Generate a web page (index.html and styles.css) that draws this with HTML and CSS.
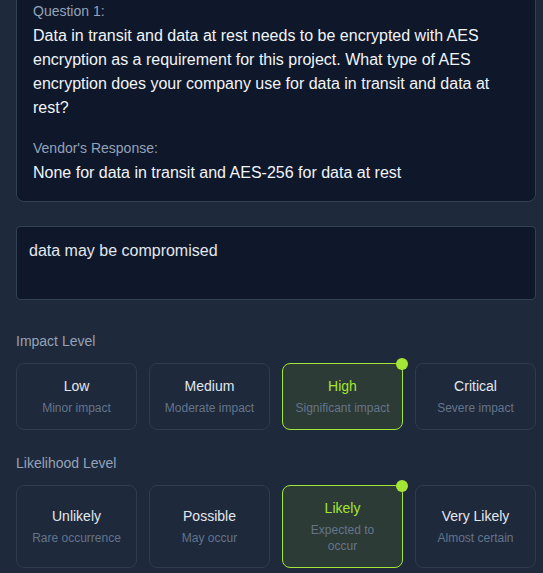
FILE: index.html
```html
<!DOCTYPE html>
<html>
<head>
<meta charset="utf-8">
<link rel="stylesheet" href="styles.css">
</head>
<body>
<div class="page">
  <div class="question-card">
    <div class="label">Question 1:</div>
    <div class="question-text">Data in transit and data at rest needs to be encrypted with AES encryption as a requirement for this project. What type of AES encryption does your company use for data in transit and data at rest?</div>
    <div class="label vendor-label">Vendor's Response:</div>
    <div class="response-text">None for data in transit and AES-256 for data at rest</div>
  </div>

  <div class="notes">data may be compromised</div>

  <div class="section-label impact-label">Impact Level</div>
  <div class="options">
    <div class="option"><div class="opt-title">Low</div><div class="opt-sub">Minor impact</div></div>
    <div class="option"><div class="opt-title">Medium</div><div class="opt-sub">Moderate impact</div></div>
    <div class="option selected"><div class="opt-title">High</div><div class="opt-sub">Significant impact</div><span class="dot"></span></div>
    <div class="option"><div class="opt-title">Critical</div><div class="opt-sub">Severe impact</div></div>
  </div>

  <div class="section-label likelihood-label">Likelihood Level</div>
  <div class="options">
    <div class="option"><div class="opt-title">Unlikely</div><div class="opt-sub">Rare occurrence</div></div>
    <div class="option"><div class="opt-title">Possible</div><div class="opt-sub">May occur</div></div>
    <div class="option selected"><div class="opt-title">Likely</div><div class="opt-sub">Expected to occur</div><span class="dot"></span></div>
    <div class="option"><div class="opt-title">Very Likely</div><div class="opt-sub">Almost certain</div></div>
  </div>

  <div class="next-edge"></div>
</div>
</body>
</html>
```

FILE: styles.css
```css
html, body {
  margin: 0;
  padding: 0;
  background: #1e293b;
  overflow: hidden;
}
body {
  font-family: "Liberation Sans", Arial, sans-serif;
  color: #e2e8f0;
}
.page {
  width: 520px;
  margin-left: 16px;
}
.question-card {
  margin-top: -16px;
  background: #0f172a;
  border: 1px solid #334155;
  border-radius: 8px;
  padding: 16px 16px 16px 16px;
}
.label {
  font-size: 14px;
  line-height: 20px;
  color: #94a3b8;
}
.question-text {
  margin-top: 3px;
  font-size: 16px;
  line-height: 24px;
  color: #f1f5f9;
}
.vendor-label {
  margin-top: 18px;
}
.response-text {
  margin-top: 3px;
  font-size: 16px;
  line-height: 24px;
  color: #f1f5f9;
}
.notes {
  margin-top: 24px;
  height: 74px;
  box-sizing: border-box;
  background: #0f172a;
  border: 1px solid #334155;
  border-radius: 4px;
  padding: 13px 12px;
  font-size: 16px;
  line-height: 22px;
  color: #e2e8f0;
}
.section-label {
  font-size: 14px;
  line-height: 20px;
  color: #94a3b8;
  margin-bottom: 12px;
}
.impact-label {
  margin-top: 31px;
}
.likelihood-label {
  margin-top: 23px;
}
.options {
  display: grid;
  grid-template-columns: repeat(4, 1fr);
  gap: 12px;
}
.option {
  position: relative;
  display: flex;
  flex-direction: column;
  justify-content: center;
  align-items: center;
  text-align: center;
  border: 1px solid #2f3b4f;
  border-radius: 8px;
  padding: 12px 12px 13px;
  background: #1e293b;
}
.opt-title {
  font-size: 14px;
  line-height: 20px;
  font-weight: 500;
  color: #e2e8f0;
}
.opt-sub {
  margin-top: 4px;
  font-size: 12px;
  line-height: 16px;
  color: #64748b;
}
.option.selected {
  border-color: #a3e635;
  background: #2d3b36;
}
.option.selected .opt-title {
  color: #a3e635;
}
.dot {
  position: absolute;
  top: -6px;
  right: -6px;
  width: 12px;
  height: 12px;
  border-radius: 50%;
  background: #a3e635;
}
.next-edge {
  margin-top: 6px;
  margin-left: -11px;
  width: 176px;
  height: 8px;
  border-top: 1px solid #475569;
  border-radius: 4px 4px 0 0;
}
```
